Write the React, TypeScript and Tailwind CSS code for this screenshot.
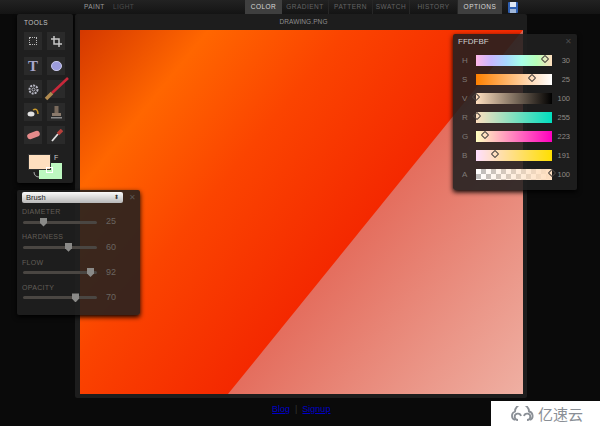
import React from "react";

const font = "font-['Liberation_Sans',Arial,sans-serif]";

function Tab({ label, active, w }: { label: string; active?: boolean; w: string }) {
  return (
    <div
      className={`${w} h-full flex items-center justify-center text-[6.5px] tracking-[0.5px] ${
        active ? "bg-[#3f3f3f] text-[#d8d8d8]" : "text-[#636363] border-r border-[#262626]"
      }`}
    >
      {label}
    </div>
  );
}

function ToolButton({ children }: { children: React.ReactNode }) {
  return <div className="w-[18px] h-[18px] bg-[#2a2a2a] flex items-center justify-center">{children}</div>;
}

function ToolRow({ children, className = "" }: { children: React.ReactNode; className?: string }) {
  return <div className={`flex gap-[5px] ${className}`}>{children}</div>;
}

function BrushSlider({ label, value, pos }: { label: string; value: number; pos: string }) {
  return (
    <div className="h-[25.3px]">
      <div className="text-[7px] leading-[8px] tracking-[0.3px] text-[#625d58]">{label}</div>
      <div className="flex items-center h-[10px] mt-[1px]">
        <div className="relative w-[74px] ml-[1px] h-[3px] bg-[#4a4642] rounded-full">
          <div className={`absolute top-[-3px] ${pos} w-[7px] h-[9px] bg-[#8a8a88] [clip-path:polygon(0_0,100%_0,100%_60%,50%_100%,0_60%)]`} />
        </div>
        <div className="ml-[9px] text-[9px] text-[#6a6560]">{value}</div>
      </div>
    </div>
  );
}

function ColorRow({ label, bar, value, pos }: { label: string; bar: string; value: number; pos: string }) {
  return (
    <div className="flex items-center h-[19px]">
      <div className="w-[23px] pl-[9px] text-[8px] text-[#7f7a76]">{label}</div>
      <div className={`relative w-[76px] h-[11.5px] ${bar}`}>
        <div className={`absolute top-[0.5px] ${pos} w-[6px] h-[6px] mt-[1px] rotate-45 rounded-[1px] border border-[#4a4440]`} />
      </div>
      <div className="w-[18px] text-right text-[7.5px] text-[#8f8a86]">{value}</div>
    </div>
  );
}

export default function App() {
  return (
    <div className={`relative w-[600px] h-[426px] overflow-hidden bg-[#0a0a0a] ${font}`}>
      {/* top bar */}
      <div className="h-[14px] flex items-center bg-[linear-gradient(#222,#141414)]">
        <div className="w-[84px]" />
        <div className="text-[6.5px] tracking-[0.4px] text-[#9a9a9a] w-[29px]">PAINT</div>
        <div className="text-[6.5px] tracking-[0.4px] text-[#4c4c4c] w-[132px]">LIGHT</div>
        <div className="flex h-full">
          <Tab label="COLOR" active w="w-[37px]" />
          <Tab label="GRADIENT" w="w-[47px]" />
          <Tab label="PATTERN" w="w-[44px]" />
          <Tab label="SWATCH" w="w-[37px]" />
          <Tab label="HISTORY" w="w-[48px]" />
          <Tab label="OPTIONS" active w="w-[44px]" />
        </div>
        <svg className="ml-[6px]" width="10" height="11" viewBox="0 0 10 11">
          <rect width="10" height="11" rx="1" fill="#2f5fb0" />
          <rect x="2" y="0" width="6" height="5" fill="#dfe8f5" />
          <rect x="2" y="7" width="6" height="4" fill="#9fb6d8" />
        </svg>
      </div>

      {/* drawing window */}
      <div className="absolute left-[75px] top-[14px] w-[452px] h-[384px] bg-[#1d1d1d] rounded-[2px] pl-[5px]">
        <div className="h-[16px] flex items-center justify-center text-[6.5px] tracking-[0.1px] text-[#8e8e8e]">DRAWING.PNG</div>
        <svg width="443" height="364" viewBox="0 0 443 364" className="block">
          <defs>
            <linearGradient id="warm" gradientUnits="userSpaceOnUse" x1="0" y1="0" x2="268" y2="217">
              <stop offset="0" stopColor="#d43800" />
              <stop offset="0.29" stopColor="#ff6600" />
              <stop offset="0.6" stopColor="#fb4400" />
              <stop offset="1" stopColor="#f42800" />
            </linearGradient>
            <linearGradient id="pink" gradientUnits="userSpaceOnUse" x1="268" y1="217" x2="447" y2="361">
              <stop offset="0" stopColor="#e46e5e" />
              <stop offset="1" stopColor="#efb0a3" />
            </linearGradient>
          </defs>
          <rect width="443" height="364" fill="url(#warm)" />
          <polygon points="148,364 443,0 443,364" fill="url(#pink)" />
        </svg>
      </div>

      {/* tools */}
      <div className="absolute left-[17px] top-[14px] w-[56px] h-[169px] bg-[#1f1f1f] rounded-[2px] pl-[7px] shadow-[0_2px_4px_#000]">
        <div className="pt-[4px] h-[18px] text-[6.5px] tracking-[0.4px] text-[#c4c4c4]">TOOLS</div>
        <ToolRow>
          <ToolButton>
            <div className="w-[8px] h-[8px] border border-dotted border-[#bbb]" />
          </ToolButton>
          <ToolButton>
            <svg width="11" height="11" viewBox="0 0 11 11" fill="none" stroke="#c8c8c8" strokeWidth="1.5">
              <path d="M3 0v8h8M0 3h8v8" />
            </svg>
          </ToolButton>
        </ToolRow>
        <ToolRow className="mt-[7px]">
          <ToolButton>
            <span className="font-['Liberation_Serif',serif] font-bold text-[15px] leading-none text-[#a8a8cc]">T</span>
          </ToolButton>
          <ToolButton>
            <div className="w-[11px] h-[10px] rounded-full bg-[#9c9cdc] border border-[#c8c8e8]" />
          </ToolButton>
        </ToolRow>
        <ToolRow className="mt-[5px]">
          <ToolButton>
            <svg width="11" height="11" viewBox="0 0 11 11" fill="none" stroke="#b8b8c4" strokeWidth="1">
              <circle cx="5.5" cy="5.5" r="4" strokeDasharray="2 1" strokeWidth="2" />
              <circle cx="5.5" cy="5.5" r="1.5" />
            </svg>
          </ToolButton>
          <ToolButton>
            <svg className="overflow-visible" width="18" height="18" viewBox="0 0 18 18" fill="none">
              <path d="M21 -2L5 13" stroke="#c8283a" strokeWidth="2.5" />
              <path d="M5 13L-1 19" stroke="#b08a50" strokeWidth="3.5" />
            </svg>
          </ToolButton>
        </ToolRow>
        <ToolRow className="mt-[5px]">
          <ToolButton>
            <svg width="13" height="11" viewBox="0 0 13 11" fill="none">
              <ellipse cx="4" cy="7" rx="3.5" ry="2.5" fill="#e2e2e2" />
              <path d="M6 3c3-2 5 0 5 4" stroke="#c89a2c" strokeWidth="1.5" />
            </svg>
          </ToolButton>
          <ToolButton>
            <svg width="11" height="13" viewBox="0 0 11 13">
              <rect x="3.5" y="0" width="4" height="7" fill="#7a6a5c" />
              <rect x="1" y="7" width="9" height="3" fill="#8a7a6c" />
              <rect x="0" y="11" width="11" height="1.5" fill="#8a8a8a" />
            </svg>
          </ToolButton>
        </ToolRow>
        <ToolRow className="mt-[5px]">
          <ToolButton>
            <div className="w-[13px] h-[6px] rounded-[3px] bg-[#e58a8a] -rotate-[20deg]" />
          </ToolButton>
          <ToolButton>
            <svg width="13" height="13" viewBox="0 0 13 13" fill="none">
              <path d="M2 12L8 5" stroke="#e2e2e2" strokeWidth="1.8" />
              <path d="M8 5L12 1" stroke="#b8403c" strokeWidth="3.5" />
            </svg>
          </ToolButton>
        </ToolRow>
        <div className="relative mt-[10px] h-[26px]">
          <div className="absolute left-[15px] top-[9px] w-[23px] h-[16px] bg-[#bdf8c0]" />
          <div className="absolute left-[4px] top-0 w-[23px] h-[16px] bg-[#ffdfbf] border border-[#333]" />
          <div className="absolute left-[30px] top-[-1px] text-[7px] text-[#c8c8c8]">F</div>
          <div className="absolute left-[22px] top-[13px] w-[7px] h-[6px] border border-white" />
          <svg className="absolute left-[9px] top-[17px]" width="7" height="7" viewBox="0 0 7 7" fill="none" stroke="#aaa">
            <path d="M1 1c0 3 2 5 5 5" />
          </svg>
        </div>
      </div>

      {/* brush panel */}
      <div className="absolute left-[17px] top-[190px] w-[123px] h-[125px] bg-[#202020]/[0.88] rounded-[2px] pl-[5px] pt-[2px] shadow-[0_2px_5px_#000]">
        <div className="flex items-center">
          <div className="w-[101px] h-[11px] rounded-[2px] bg-[linear-gradient(#fafafa,#b8b8b8)] flex items-center justify-between px-[4px] text-[7.5px] text-[#222]">
            <span>Brush</span>
            <span className="text-[6px] leading-[5px] text-[#333]">⬍</span>
          </div>
          <div className="ml-[6px] text-[8px] leading-none text-[#5a5652]">✕</div>
        </div>
        <div className="mt-[5px]">
          <BrushSlider label="DIAMETER" value={25} pos="left-[17px]" />
          <BrushSlider label="HARDNESS" value={60} pos="left-[42px]" />
          <BrushSlider label="FLOW" value={92} pos="left-[64px]" />
          <BrushSlider label="OPACITY" value={70} pos="left-[49px]" />
        </div>
      </div>

      {/* color panel */}
      <div className="absolute left-[453px] top-[34px] w-[124px] h-[156px] bg-[#202020]/[0.88] rounded-[2px] shadow-[0_2px_5px_#000]">
        <div className="flex items-center justify-between h-[13px] mt-[1px] px-[5px] text-[8px] text-[#d0d0d0]">
          <span>FFDFBF</span>
          <span className="text-[#4a4a4a]">✕</span>
        </div>
        <div className="mt-[3px]">
          <ColorRow label="H" value={30} pos="left-[66px]" bar="bg-[linear-gradient(to_right,#ffb8e8,#c8b8ff,#a8d8ff,#a8ffe8,#b8ffb8,#ffdfbf)]" />
          <ColorRow label="S" value={25} pos="left-[53px]" bar="bg-[linear-gradient(to_right,#ff8000,#ffffff)]" />
          <ColorRow label="V" value={100} pos="left-[-3px]" bar="bg-[linear-gradient(to_right,#ffdfbf,#000000)]" />
          <ColorRow label="R" value={255} pos="left-[-2px]" bar="bg-[linear-gradient(to_right,#ffdfbf,#00dfbf)]" />
          <ColorRow label="G" value={223} pos="left-[6px]" bar="bg-[linear-gradient(to_right,#ffffbf,#ff00bf)]" />
          <ColorRow label="B" value={191} pos="left-[16px]" bar="bg-[linear-gradient(to_right,#ffdfff,#ffdf00)]" />
          <ColorRow label="A" value={100} pos="left-[73px]" bar="bg-[linear-gradient(to_right,rgba(255,223,191,0),#ffdfbf),repeating-conic-gradient(#bbb_0_25%,#fff_0_50%)] bg-[length:auto,10px_10px]" />
        </div>
      </div>

      {/* footer */}
      <div className="absolute left-[272px] top-[404px] text-[9px] leading-[11px] text-[#0000c8] flex gap-[5px]">
        <span className="underline">Blog</span>
        <span className="text-[#333]">|</span>
        <span className="underline">Signup</span>
      </div>

      {/* watermark */}
      <div className="absolute left-[491px] top-[401px] w-[109px] h-[25px] bg-white flex items-center pl-[19px] gap-[3px] text-[#8a8f96]">
        <svg width="25" height="16" viewBox="0 0 25 16" fill="none" stroke="#8a8f96" strokeWidth="1.8">
          <path d="M5 14a4.5 4.5 0 0 1 0-8.5 7 7 0 0 1 14 0 4.5 4.5 0 0 1 1 8.5" />
          <path d="M11 10a3.2 3.2 0 1 0-3 4" />
          <path d="M14 10a3.2 3.2 0 1 1 3 4" />
        </svg>
        <span className="text-[15px] leading-none font-['Noto_Sans_CJK_SC',sans-serif]">亿速云</span>
      </div>
    </div>
  );
}
